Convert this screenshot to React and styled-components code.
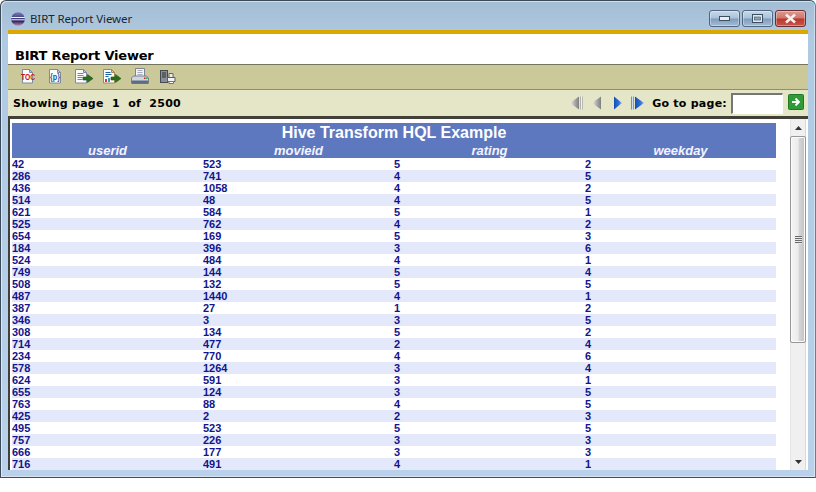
import React from "react";
import styled, { createGlobalStyle } from "styled-components";

const Global = createGlobalStyle`
  html, body { margin: 0; padding: 0; background: #fff; }
  * { box-sizing: border-box; }
`;

const rows = [
  [42, 523, 5, 2], [286, 741, 4, 5], [436, 1058, 4, 2], [514, 48, 4, 5], [621, 584, 5, 1],
  [525, 762, 4, 2], [654, 169, 5, 3], [184, 396, 3, 6], [524, 484, 4, 1], [749, 144, 5, 4],
  [508, 132, 5, 5], [487, 1440, 4, 1], [387, 27, 1, 2], [346, 3, 3, 5], [308, 134, 5, 2],
  [714, 477, 2, 4], [234, 770, 4, 6], [578, 1264, 3, 4], [624, 591, 3, 1], [655, 124, 3, 5],
  [763, 88, 4, 5], [425, 2, 2, 3], [495, 523, 5, 5], [757, 226, 3, 3], [666, 177, 3, 3],
  [716, 491, 4, 1],
];

const Page = styled.div`
  width: 816px;
  height: 492px;
  background: #fff;
  overflow: hidden;
`;
const Window = styled.div`
  width: 816px;
  height: 478px;
  display: flex;
  flex-direction: column;
  padding: 0 7px 7px 7px;
  border: 1px solid #3b4a58;
  border-bottom-color: #17606e;
  border-right-color: #2f97a8;
  border-radius: 6px 6px 0 0;
  background: linear-gradient(180deg, #a3bdd4 0%, #b0cae3 8%, #b9d1ea 100%);
  box-shadow: inset 1px 1px 0 rgba(255, 255, 255, 0.55), inset -1px -1px 0 rgba(255, 255, 255, 0.4);
`;
const TitleBar = styled.div`
  height: 29px;
  flex: none;
  display: flex;
  align-items: flex-start;
  padding-top: 9px;
`;
const AppLogo = styled.svg`
  width: 14px;
  height: 14px;
  margin: 2px 5px 0 3px;
  flex: none;
`;
const WinTitle = styled.div`
  font: 11.5px/18px "Noto Sans", "Open Sans", sans-serif;
  color: #1c2733;
  flex: 1;
  letter-spacing: -0.1px;
`;
const WinButtons = styled.div`
  display: flex;
  gap: 2px;
  margin-right: 2px;
`;
const WinButton = styled.div`
  width: 31px;
  height: 17px;
  border: 1px solid ${(p) => (p.$close ? "#6b2c34" : "#51667e")};
  border-radius: 3px;
  display: flex;
  align-items: center;
  justify-content: center;
  box-shadow: inset 0 0 0 1px rgba(255, 255, 255, 0.35);
  background: ${(p) =>
    p.$close
      ? "linear-gradient(180deg,#d99a90 0%,#d0766b 48%,#b8372c 52%,#c8574c 100%)"
      : "linear-gradient(180deg,#c6d8e8 0%,#a9c2da 48%,#7f9cba 52%,#a2bcd6 100%)"};
`;
const GoldBar = styled.div`
  height: 4px;
  flex: none;
  background: #dca700;
`;
const Banner = styled.div`
  height: 31px;
  flex: none;
  background: #fff;
  border-bottom: 1px solid #75755f;
  padding: 14px 0 0 7px;
  font: bold 13px/16px "DejaVu Sans", Verdana, sans-serif;
  color: #000;
  letter-spacing: -0.2px;
`;
const Toolbar = styled.div`
  height: 25px;
  flex: none;
  background: #cbc999;
  border-bottom: 1px solid #8f8e70;
  display: flex;
  align-items: center;
  padding-left: 11px;
  gap: 8px;
`;
const ToolIcon = styled.svg.attrs({ viewBox: "0 0 20 18" })`
  width: 20px;
  height: 18px;
  flex: none;
`;
const IconLabel = styled.text`
  font-family: "Liberation Sans", Arial, sans-serif;
  font-weight: bold;
`;
const NavBar = styled.div`
  height: 26px;
  flex: none;
  background: #e5e5c7;
  display: flex;
  align-items: center;
  padding: 0 4px 0 5px;
`;
const PageInfo = styled.div`
  flex: 1;
  padding-top: 1px;
  font: bold 11px/14px "DejaVu Sans", Verdana, sans-serif;
  letter-spacing: 0.28px;
  color: #000;
  white-space: pre;
`;
const NavArrows = styled.div`
  display: flex;
  align-items: center;
  margin-right: 8px;
`;
const NavIcon = styled.svg`
  width: ${(p) => p.$w}px;
  height: 14px;
  flex: none;
  margin-left: ${(p) => p.$gap || 0}px;
`;
const GoLabel = styled.label`
  padding-top: 1px;
  font: bold 11px/14px "DejaVu Sans", Verdana, sans-serif;
  letter-spacing: 0.25px;
  color: #000;
  margin-right: 4px;
`;
const GoInput = styled.input`
  width: 52px;
  height: 21px;
  border: 1px solid #fff;
  border-top: 2px solid #767676;
  border-left: 2px solid #767676;
  background: #fff;
  padding: 0;
  margin: 0 5px 0 0;
`;
const GoButton = styled.svg`
  width: 16px;
  height: 16px;
  flex: none;
  margin-bottom: 3px;
`;
const Content = styled.div`
  flex: 1;
  min-height: 0;
  background: #fff;
  border-top: 3px solid #403f38;
  border-left: 2px solid #403f38;
  display: flex;
`;
const ReportArea = styled.div`
  flex: 1;
  min-width: 0;
  overflow: hidden;
  padding: 4px 0 0 2px;
`;
const Table = styled.div`
  width: 764px;
`;
const ReportTitle = styled.div`
  height: 21px;
  background: #5e78bf;
  color: #fff;
  text-align: center;
  font: bold 16px/20px "Liberation Sans", Arial, sans-serif;
`;
const HeaderRow = styled.div`
  height: 14px;
  display: grid;
  grid-template-columns: repeat(4, 191px);
  background: #5e78bf;
`;
const HeaderCell = styled.div`
  color: #f2f4ff;
  text-align: center;
  font: italic bold 13px/13px "Liberation Sans", Arial, sans-serif;
`;
const DataRow = styled.div`
  height: 12px;
  display: grid;
  grid-template-columns: repeat(4, 191px);
  background: ${(p) => (p.$alt ? "#e3e9fb" : "#fff")};
`;
const DataCell = styled.div`
  color: #14148c;
  font: bold 11px/12px "Liberation Sans", Arial, sans-serif;
`;
const Scrollbar = styled.div`
  width: 16px;
  flex: none;
  margin-right: 2px;
  background: #f0f0f0;
  border-left: 1px solid #e6e6e6;
  border-right: 1px solid #d8d8d8;
  display: flex;
  flex-direction: column;
  align-items: stretch;
`;
const ScrollArrow = styled.div`
  height: 17px;
  flex: none;
  display: flex;
  align-items: center;
  justify-content: center;
`;
const ScrollTrack = styled.div`
  flex: 1;
  min-height: 0;
`;
const ScrollThumb = styled.div`
  height: 207px;
  margin-left: -1px;
  margin-right: -1px;
  border: 1px solid #979797;
  border-radius: 2px;
  background: linear-gradient(90deg, #f4f4f4 0%, #ececec 50%, #d4d4d4 60%, #c2c2c2 100%);
  box-shadow: inset 0 0 0 1px #fafafa;
  display: flex;
  align-items: center;
  justify-content: center;
`;
const Grip = styled.div`
  width: 7px;
  height: 8px;
  background: repeating-linear-gradient(180deg, #6b6b6b 0 1px, #e8e8e8 1px 2px);
`;

const Sheet = ({ x = 1.5, w = 10, stroke = "#7f8aa0" }) => (
  <>
    <path
      d={`M${x} 1.500h${w - 3}l3 3V15h-${w}z`}
      fill="#fbfbfb"
      stroke={stroke}
    />
    <path d={`M${x + w - 3} 1.500v3h3z`} fill="#c6d0dc" stroke={stroke} />
  </>
);

const GreenArrow = () => (
  <path
    d="M8 9h4.500V6.500L18 10.500l-5.500 4V12H8z"
    fill="#2a6f1a"
    stroke="#1d5514"
    strokeWidth="0.6"
  />
);

const IconToc = () => (
  <ToolIcon>
    <Sheet x={3.5} w={10} />
    <IconLabel x="2" y="12" fontSize="9" fill="#d01010" textLength="14" lengthAdjust="spacingAndGlyphs">
      TOC
    </IconLabel>
  </ToolIcon>
);
const IconParam = () => (
  <ToolIcon>
    <Sheet x={2.5} w={11} />
    <IconLabel x="3" y="12" fontSize="9" fill="#1a5a9c" textLength="10" lengthAdjust="spacingAndGlyphs">
      {"{p}"}
    </IconLabel>
  </ToolIcon>
);
const IconExportData = () => (
  <ToolIcon>
    <Sheet x={0.5} w={11} />
    <path d="M2.500 5.500h6M2.500 7.500h6M2.500 9.500h5M2.500 11.500h5" stroke="#a08a20" />
    <GreenArrow />
  </ToolIcon>
);
const IconExportReport = () => (
  <ToolIcon>
    <Sheet x={0.5} w={11} stroke="#a08a50" />
    <path d="M2.500 4.500h5M2.500 6.500h6M2.500 8.500h3" stroke="#1c5fa8" />
    <rect x="2" y="11" width="2" height="3" fill="#e03040" />
    <rect x="5" y="10" width="2" height="4" fill="#30a0d0" />
    <GreenArrow />
  </ToolIcon>
);
const IconPrint = () => (
  <ToolIcon>
    <path d="M4.500 0.500h9v8h-9z" fill="#f4f5f6" stroke="#7d8592" />
    <path d="M6.500 2.500h5M6.500 4.500h5M6.500 6.500h5" stroke="#a6adb8" />
    <path d="M0.500 10l2-2h13l2 2v5.500h-17z" fill="#d2d7df" stroke="#76808e" />
    <rect x="1" y="12.500" width="16" height="3" fill="#5d6c84" />
    <rect x="13" y="9.500" width="1.500" height="1.500" fill="#d02020" />
    <rect x="15" y="9.500" width="1.500" height="1.500" fill="#30a040" />
  </ToolIcon>
);
const IconServerPrint = () => (
  <ToolIcon>
    <rect x="1.500" y="2.500" width="7" height="12" fill="#8a8f96" stroke="#454a50" />
    <path d="M3 5h4M3 7h4M3 9h4" stroke="#2c3036" />
    <path d="M10 5.500h4v4h-4z" fill="#eee" stroke="#666" />
    <path d="M8.500 9.500h7.500v4H8.500z" fill="#f2f2f2" stroke="#5a5f66" />
    <path d="M10 13.500h4.500v2H10z" fill="#fff" stroke="#777" />
  </ToolIcon>
);

const Defs = () => (
  <svg width="0" height="0" style={{ position: "absolute" }}>
    <defs>
      <linearGradient id="greyTri" x1="0" x2="1" y1="0" y2="0">
        <stop offset="0" stopColor="#eeeeea" />
        <stop offset="0.55" stopColor="#a8a9a8" />
        <stop offset="1" stopColor="#7f807e" />
      </linearGradient>
      <linearGradient id="greyBar" x1="0" x2="1" y1="0" y2="0">
        <stop offset="0" stopColor="#8f908e" />
        <stop offset="0.5" stopColor="#f2f2ee" />
        <stop offset="1" stopColor="#9a9b98" />
      </linearGradient>
      <linearGradient id="blueTri" x1="0" x2="1" y1="0" y2="0">
        <stop offset="0" stopColor="#1450b4" />
        <stop offset="0.6" stopColor="#2f72d8" />
        <stop offset="1" stopColor="#8db8f0" />
      </linearGradient>
      <linearGradient id="blueBar" x1="0" x2="1" y1="0" y2="0">
        <stop offset="0" stopColor="#2f6cc8" />
        <stop offset="0.5" stopColor="#cfe0f6" />
        <stop offset="1" stopColor="#3d7ad2" />
      </linearGradient>
      <linearGradient id="eclipse" x1="0" y1="0" x2="0" y2="1">
        <stop offset="0" stopColor="#7d7bbc" />
        <stop offset="0.65" stopColor="#24225e" />
        <stop offset="1" stopColor="#c88ab0" />
      </linearGradient>
    </defs>
  </svg>
);

const First = () => (
  <NavIcon $w={13} viewBox="0 0 13 14">
    <path d="M9 0.500v13L0 7z" fill="url(#greyTri)" />
    <rect x="10" y="0.500" width="3" height="13" fill="url(#greyBar)" />
  </NavIcon>
);
const Prev = () => (
  <NavIcon $w={9} $gap={9} viewBox="0 0 9 14">
    <path d="M9 0.500v13L0 7z" fill="url(#greyTri)" />
  </NavIcon>
);
const Next = () => (
  <NavIcon $w={8} $gap={13} viewBox="0 0 8 14">
    <path d="M0 0.500v13L8 7z" fill="url(#blueTri)" />
  </NavIcon>
);
const Last = () => (
  <NavIcon $w={13} $gap={9} viewBox="0 0 13 14">
    <rect x="0" y="0.500" width="3" height="13" fill="url(#blueBar)" />
    <path d="M4 0.500v13L13 7z" fill="url(#blueTri)" />
  </NavIcon>
);

export default function App() {
  return (
    <Page>
      <Global />
      <Defs />
      <Window>
        <TitleBar>
          <AppLogo viewBox="0 0 14 14">
            <circle cx="7" cy="7" r="6.800" fill="url(#eclipse)" />
            <path d="M0.300 5.500h13.400M0.300 7.800h13.400" stroke="#f2f0f8" strokeWidth="1" />
          </AppLogo>
          <WinTitle>BIRT Report Viewer</WinTitle>
          <WinButtons>
            <WinButton>
              <svg width="11" height="5" viewBox="0 0 11 5">
                <rect x="0.500" y="0.500" width="10" height="4" fill="#e8edf2" stroke="#3d4f63" />
              </svg>
            </WinButton>
            <WinButton>
              <svg width="11" height="9" viewBox="0 0 11 9">
                <rect x="0.500" y="0.500" width="10" height="8" fill="#dfe7ef" stroke="#3d4f63" />
                <rect x="2.500" y="3" width="6" height="3" fill="#8ba5bf" stroke="#3d4f63" strokeWidth="0.6" />
              </svg>
            </WinButton>
            <WinButton $close>
              <svg width="13" height="11" viewBox="0 0 13 11">
                <path d="M2 1.500l9 8M11 1.500l-9 8" stroke="#f4f0ee" strokeWidth="2.600" />
              </svg>
            </WinButton>
          </WinButtons>
        </TitleBar>
        <GoldBar />
        <Banner>BIRT Report Viewer</Banner>
        <Toolbar>
          <IconToc />
          <IconParam />
          <IconExportData />
          <IconExportReport />
          <IconPrint />
          <IconServerPrint />
        </Toolbar>
        <NavBar>
          <PageInfo>{"Showing page  1  of  2500"}</PageInfo>
          <NavArrows>
            <First />
            <Prev />
            <Next />
            <Last />
          </NavArrows>
          <GoLabel htmlFor="goto">Go to page:</GoLabel>
          <GoInput id="goto" type="text" />
          <GoButton viewBox="0 0 16 16">
            <rect x="0.500" y="0.500" width="15" height="15" rx="1" fill="#2f9a36" stroke="#1f7a28" />
            <path d="M4 8h6M7.500 4.500L11 8l-3.500 3.500" fill="none" stroke="#fff" strokeWidth="1.800" />
          </GoButton>
        </NavBar>
        <Content>
          <ReportArea>
            <Table>
              <ReportTitle>Hive Transform HQL Example</ReportTitle>
              <HeaderRow>
                <HeaderCell>userid</HeaderCell>
                <HeaderCell>movieid</HeaderCell>
                <HeaderCell>rating</HeaderCell>
                <HeaderCell>weekday</HeaderCell>
              </HeaderRow>
              {rows.map((r, i) => (
                <DataRow key={i} $alt={i % 2 === 1}>
                  {r.map((v, j) => (
                    <DataCell key={j}>{v}</DataCell>
                  ))}
                </DataRow>
              ))}
            </Table>
          </ReportArea>
          <Scrollbar>
            <ScrollArrow>
              <svg width="7" height="4" viewBox="0 0 7 4">
                <path d="M3.500 0L7 4H0z" fill="#333" />
              </svg>
            </ScrollArrow>
            <ScrollTrack>
              <ScrollThumb>
                <Grip />
              </ScrollThumb>
            </ScrollTrack>
            <ScrollArrow>
              <svg width="7" height="4" viewBox="0 0 7 4">
                <path d="M0 0h7L3.500 4z" fill="#333" />
              </svg>
            </ScrollArrow>
          </Scrollbar>
        </Content>
      </Window>
    </Page>
  );
}
